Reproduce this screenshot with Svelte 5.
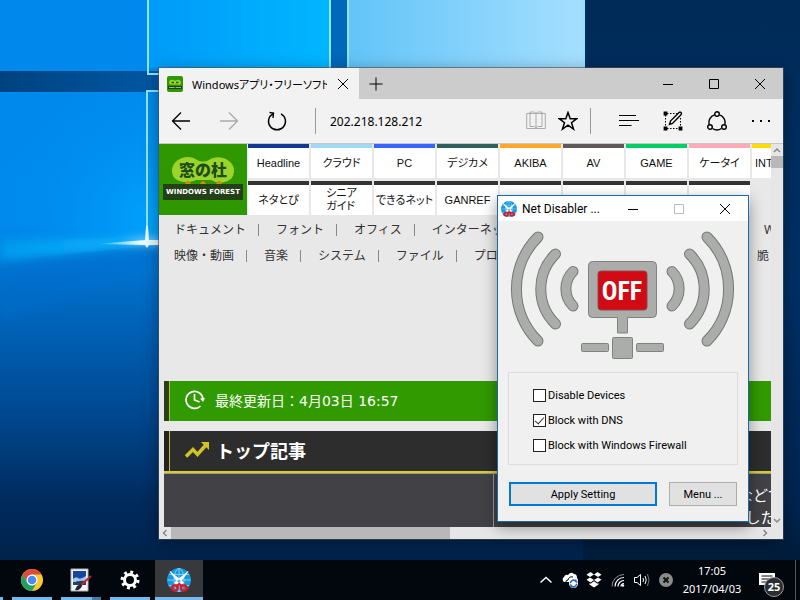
<script lang="ts">
  type NavItem = { label: string; color: string };

  const sites: NavItem[] = [
    { label: "Headline", color: "#103794" },
    { label: "クラウド", color: "#a0d8f5" },
    { label: "PC", color: "#3764ff" },
    { label: "デジカメ", color: "#2c6160" },
    { label: "AKIBA", color: "#ffa726" },
    { label: "AV", color: "#605758" },
    { label: "GAME", color: "#00cf63" },
    { label: "ケータイ", color: "#ffabb7" },
    { label: "INTERNET", color: "#ffdc00" },
  ];
  const moreSites = ["ネタとぴ", "シニア\nガイド", "できるネット", "GANREF", "", "", "", ""];

  const categories = [
    { links: ["ドキュメント", "フォント", "オフィス", "インターネット"], last: "W" },
    { links: ["映像・動画", "音楽", "システム", "ファイル", "プログラミング"], last: "脆" },
  ];

  let address = $state("202.218.128.212");
  let options = $state([
    { id: "devices", label: "Disable Devices", checked: false },
    { id: "dns", label: "Block with DNS", checked: true },
    { id: "firewall", label: "Block with Windows Firewall", checked: false },
  ]);
</script>

{#snippet appIcon(size: number)}
  <svg width={size} height={size} viewBox="0 0 24 24">
    <circle cx="12" cy="12" r="12" fill="#1797dd" />
    <g fill="none" stroke="#7fd0f5" stroke-width="1">
      <ellipse cx="12" cy="12" rx="5" ry="11.5" />
      <path d="M12 0v24M0.500 12h23M2 6.500h20M2 17.500h20" />
    </g>
    <path d="M3 3.500 13.500 18l3-3.500zM21 3.500 10.500 18l-3-3.500z" fill="#fff" stroke="#fff" stroke-width="0.800" />
    <g fill="none" stroke="#e3141c" stroke-width="2.200">
      <ellipse cx="7.800" cy="20" rx="2.800" ry="2.600" />
      <ellipse cx="16.800" cy="20" rx="2.800" ry="2.600" />
      <path d="m9.500 18 2.800-2 2.800 2" />
      <path d="M4.500 19v3M20.500 19v3" stroke-width="1.500" />
    </g>
  </svg>
{/snippet}

<div class="screen">
  <main class="desktop">
    <svg class="wallpaper" viewBox="0 0 800 560" preserveAspectRatio="none" aria-hidden="true">
      <defs>
        <linearGradient id="base" x1="0" y1="0" x2="0" y2="1">
          <stop offset="0" stop-color="#0088ec" />
          <stop offset="0.400" stop-color="#008aee" />
          <stop offset="0.520" stop-color="#006cc6" />
          <stop offset="0.720" stop-color="#004b95" />
          <stop offset="0.900" stop-color="#002a5c" />
          <stop offset="1" stop-color="#00234b" />
        </linearGradient>
        <linearGradient id="night" x1="0" y1="0" x2="0" y2="1">
          <stop offset="0" stop-color="#002b58" />
          <stop offset="0.500" stop-color="#003066" />
          <stop offset="0.900" stop-color="#002450" />
          <stop offset="1" stop-color="#001c3b" />
        </linearGradient>
        <linearGradient id="pane-left" x1="0" y1="0" x2="1" y2="0">
          <stop offset="0" stop-color="#009af8" />
          <stop offset="1" stop-color="#00b7ff" />
        </linearGradient>
        <linearGradient id="pane-right" x1="0" y1="0" x2="1" y2="0">
          <stop offset="0" stop-color="#62c4f8" />
          <stop offset="1" stop-color="#a5dfff" />
        </linearGradient>
        <linearGradient id="beam" x1="0" y1="0" x2="1" y2="0">
          <stop offset="0" stop-color="#00b4ff" stop-opacity="0.500" />
          <stop offset="0.750" stop-color="#14c0ff" stop-opacity="0.700" />
          <stop offset="1" stop-color="#e8fbff" />
        </linearGradient>
        <linearGradient id="flare" x1="0" y1="0" x2="1" y2="0">
          <stop offset="0" stop-color="#e9fcff" stop-opacity="0" />
          <stop offset="0.700" stop-color="#e9fcff" />
        </linearGradient>
        <radialGradient id="glow" cx="160" cy="220" r="165" gradientUnits="userSpaceOnUse">
          <stop offset="0" stop-color="#00a4ff" />
          <stop offset="1" stop-color="#008bed" stop-opacity="0" />
        </radialGradient>
        <linearGradient id="bar" x1="0" y1="0" x2="1" y2="0">
          <stop offset="0" stop-color="#00427f" />
          <stop offset="1" stop-color="#0058a4" />
        </linearGradient>
        <filter id="soft" x="-20%" y="-60%" width="140%" height="220%"><feGaussianBlur stdDeviation="5" /></filter>
      </defs>
      <rect width="800" height="560" fill="url(#base)" />
      <path d="M0 0h160v245L0 260z" fill="url(#glow)" />
      <rect x="583" width="217" height="560" fill="url(#night)" />
      <rect y="71" width="160" height="21" fill="url(#bar)" />
      <rect x="147" width="186" height="68" fill="url(#pane-left)" />
      <rect x="331" width="16" height="68" fill="#0068b8" />
      <rect x="348" width="236" height="68" fill="url(#pane-right)" />
      <g fill="none" stroke="#8ee6ff" stroke-width="2">
        <path d="M148 0v74h12M147 245V91h13M330 0v68M348 0v68M584 0v68" />
      </g>
      <path d="M0 240 145 238l15 2v5l-14 1L0 262z" fill="url(#beam)" filter="url(#soft)" />
      <path d="M0 266 146 246h14v18L0 322z" fill="#006dcc" opacity="0.500" filter="url(#soft)" />
      <path d="M96 244 145 240l1-14h2l1 14h11v5h-11l-2 3-2-3z" fill="url(#flare)" />
    </svg>

    <section class="browser" aria-label="Browser">
      <header class="tab-bar">
        <div class="tab">
          <svg width="16" height="16" viewBox="0 0 16 16">
            <rect width="16" height="16" rx="2" fill="#2f9800" />
            <path d="M2 6.500a3 3 0 0 1 5-2h2a3 3 0 0 1 5 2c0 2-2 3-3 2H5c-2 .500-3-1-3-2z" fill="#9bd52b" />
            <path d="M4.500 6.500h2.500M9 6.500h2.500" stroke="#1e5318" stroke-width="1.500" />
            <path d="M1 10h14v3H1z" fill="#244019" />
            <path d="M2 11.500h5.500M8.500 11.500H14" stroke="#9db394" />
          </svg>
          <span class="tab-title">Windowsアプリ・フリーソフト</span>
          <button class="tab-close" aria-label="Close tab">
            <svg width="12" height="12" viewBox="0 0 12 12"><path d="m1 1 10 10M11 1 1 11" /></svg>
          </button>
        </div>
        <button class="new-tab" aria-label="New tab">
          <svg width="14" height="14" viewBox="0 0 14 14"><path d="M7 0.500v13M0.500 7h13" /></svg>
        </button>
        <div class="window-buttons">
          <button aria-label="Minimize"><svg width="12" height="12" viewBox="0 0 12 12"><path d="M1 6.500h10" /></svg></button>
          <button aria-label="Maximize"><svg width="12" height="12" viewBox="0 0 12 12"><path d="M1.500 1.500h9v9h-9z" /></svg></button>
          <button aria-label="Close"><svg width="12" height="12" viewBox="0 0 12 12"><path d="m1 1 10 10M11 1 1 11" /></svg></button>
        </div>
      </header>

      <div class="toolbar">
        <div class="history">
          <button aria-label="Back">
            <svg width="20" height="20" viewBox="0 0 20 20"><path d="M19 10H1.500M10 1.500 1.500 10l8.500 8.500" stroke-width="1.300" /></svg>
          </button>
          <button class="disabled" aria-label="Forward" disabled>
            <svg width="20" height="20" viewBox="0 0 20 20"><path d="M1 10h17.500M10 1.500l8.500 8.500-8.500 8.500" stroke-width="1.300" /></svg>
          </button>
          <button aria-label="Refresh">
            <svg width="20" height="20" viewBox="0 0 20 20"><path d="M6 2.800A8.500 8.500 0 1 0 14 2.800M2.500 1.500 6.500 2l-.5 5" stroke-width="1.400" /></svg>
          </button>
        </div>
        <input class="address" bind:value={address} aria-label="Address" />
        <button class="small disabled" aria-label="Reading view">
          <svg width="20" height="20" viewBox="0 0 20 20"><path d="M.7 2.500h18.600v15H.7zM4 1h4.500L10 2.500 11.500 1H16v14.500h-4.500L10 17l-1.500-1.500H4zM10 2.500V17" /></svg>
        </button>
        <button class="small" aria-label="Add to favorites">
          <svg width="20" height="20" viewBox="0 0 20 20"><path d="m10 1.500 2.200 6.200h6.600l-5.300 4 2 6.300-5.500-3.900L4.500 18l2-6.300-5.300-4h6.600z" stroke-width="1.500" /></svg>
        </button>
        <div class="tools">
          <button aria-label="Hub">
            <svg width="20" height="20" viewBox="0 0 20 20"><path d="M0 4.500h17M0 9.500h20M0 14.500h12.500" stroke-width="1.200" /></svg>
          </button>
          <button aria-label="Web note">
            <svg width="20" height="20" viewBox="0 0 20 20">
              <path d="M4 2.500h10M2.500 4v12M4 17.500h12M17.500 7v9" stroke-dasharray="1.500 1.500" />
              <path d="M1.500 1.500h2v2h-2zM1.500 16.500h2v2h-2zM16.500 16.500h2v2h-2z" stroke-width="1.800" />
              <path d="m6.500 13.500 1-3.500L16 1.500q1.500-1 2.200.3.800 1-.2 2L9.500 12.500z" stroke-width="1.400" />
            </svg>
          </button>
          <button aria-label="Share">
            <svg width="20" height="20" viewBox="0 0 20 20">
              <g stroke-width="1.400">
                <circle cx="10" cy="3" r="2.300" /><circle cx="3" cy="16" r="2.300" /><circle cx="17" cy="16" r="2.300" />
                <path d="M7.500 3.800A8 8 0 0 0 2.200 13.500M12.500 3.800A8 8 0 0 1 17.800 13.500M5.500 17.500a8 8 0 0 0 9 0" />
              </g>
            </svg>
          </button>
          <button aria-label="More">
            <svg width="20" height="20" viewBox="0 0 20 20"><path d="M1 9h2v2H1zM9 9h2v2H9zM17 9h2v2h-2z" fill="currentColor" stroke="none" /></svg>
          </button>
        </div>
      </div>

      <div class="viewport">
        <div class="page">
          <div class="site-header">
            <a class="logo" href="#top" aria-label="窓の杜">
              <svg width="80" height="46" viewBox="0 0 80 46">
                <path d="M9 15C9 3 25-3 34 4q6 3 12 0C55-3 72 4 71 15c0 12-15 14-23 9H33C25 28 9 27 9 15z" fill="#9bd52b" />
                <path d="M22 28q3-7 6 0zM37 28q3-6 6 0zM53 28q3-7 6 0z" fill="#d58b0a" />
                <path d="M0 28h80v16H0z" fill="#244019" />
                <text class="logo-name" x="40" y="20">窓の杜</text>
                <text class="logo-sub" x="40" y="38">WINDOWS FOREST</text>
              </svg>
            </a>
            <nav class="sites">
              {#each sites as site}
                <a class="site" href="#top" style:border-color={site.color}>{site.label}</a>
              {/each}
              {#each moreSites as site}
                {#if site}
                  <a class="site" href="#top">{site}</a>
                {:else}
                  <span class="site"></span>
                {/if}
              {/each}
            </nav>
          </div>

          <div class="categories">
            {#each categories as row}
              <nav class="category-row">
                {#each row.links as link}
                  <a href="#top">{link}</a>
                {/each}
                <a class="last" href="#top">{row.last}</a>
              </nav>
            {/each}
          </div>

          <div class="banner updated">
            <svg width="20" height="20" viewBox="0 0 20 20" fill="none" stroke="#fff" stroke-width="1.700">
              <path d="M15.500 16A8.500 8.500 0 1 1 18 9" />
              <path d="M9.500 4v6l5 2" />
              <path d="m15 8.500 5-.5-2 4z" fill="#fff" stroke="none" />
            </svg>
            最終更新日：4月03日 16:57
          </div>

          <h2 class="banner top-news">
            <svg width="24" height="18" viewBox="0 0 24 18">
              <path d="m1 15.500 7-7 4.500 5 8-9" fill="none" stroke="#d0c426" stroke-width="3.500" />
              <path d="M16 1h8v8z" fill="#d0c426" />
            </svg>
            トップ記事
          </h2>
          <div class="news">
            <div class="news-photo"></div>
            <p>などで<br />&ensp;した</p>
          </div>
        </div>

        <div class="v-scroll">
          <svg width="12" height="12" viewBox="0 0 12 12"><path d="m3 8 3-3 3 3" /></svg>
          <div class="v-thumb"></div>
          <svg class="down" width="12" height="12" viewBox="0 0 12 12"><path d="m3 4 3 3 3-3" /></svg>
        </div>
        <div class="h-scroll">
          <svg width="12" height="12" viewBox="0 0 12 12"><path d="M7.500 3 4.500 6l3 3" /></svg>
          <div class="h-thumb"></div>
          <svg class="right" width="12" height="12" viewBox="0 0 12 12"><path d="m4.500 3 3 3-3 3" /></svg>
        </div>
      </div>
    </section>

    <section class="dialog" aria-label="Net Disabler">
      <header class="dialog-title">
        {@render appIcon(16)}
        <span>Net Disabler ...</span>
        <div class="window-buttons">
          <button aria-label="Minimize"><svg width="12" height="12" viewBox="0 0 12 12"><path d="M1 6.500h10" /></svg></button>
          <button class="disabled" aria-label="Maximize" disabled><svg width="12" height="12" viewBox="0 0 12 12"><path d="M1.500 1.500h9v9h-9z" /></svg></button>
          <button aria-label="Close"><svg width="12" height="12" viewBox="0 0 12 12"><path d="m1 1 10 10M11 1 1 11" /></svg></button>
        </div>
      </header>

      <svg class="status" viewBox="0 0 250 140" role="img" aria-label="OFF">
        <defs>
          <g id="waves" fill="none" stroke-linecap="round">
            <path d="M209 16a73.500 73.500 0 0 1 0 104" />
            <path d="M191.500 33a49 49 0 0 1 0 70" />
            <path d="M174 50.500a24.500 24.500 0 0 1 0 34.500" />
          </g>
        </defs>
        <g stroke="#757775" stroke-width="11">
          <use href="#waves" />
          <use href="#waves" transform="matrix(-1 0 0 1 249 0)" />
        </g>
        <g stroke="#abadab" stroke-width="9">
          <use href="#waves" />
          <use href="#waves" transform="matrix(-1 0 0 1 249 0)" />
        </g>
        <g fill="#abadab" stroke="#808280">
          <rect x="90.500" y="40.500" width="68" height="56" rx="4" />
          <path d="M119.500 96.500v15.500h10V96.500" />
          <rect x="114.500" y="116.500" width="20" height="21" rx="1" />
          <rect x="83.500" y="122.500" width="27" height="8" rx="1" />
          <rect x="138.500" y="122.500" width="27" height="8" rx="1" />
        </g>
        <path d="M120 94h9v5h-9z" fill="#abadab" />
        <rect x="100" y="50" width="49" height="39" rx="3" fill="#d20a14" stroke="#8c4a4c" />
        <text class="off" x="124" y="79">OFF</text>
      </svg>

      <fieldset class="options">
        {#each options as option (option.id)}
          <div class="option">
            <input type="checkbox" id={option.id} bind:checked={option.checked} />
            <label for={option.id}>{option.label}</label>
          </div>
        {/each}
      </fieldset>

      <div class="actions">
        <button class="apply">Apply Setting</button>
        <button class="menu">Menu ...</button>
      </div>
    </section>
  </main>

  <footer class="taskbar">
    <div class="task-edge"></div>
    <div class="tasks">
      <button class="task" aria-label="Chrome">
        <svg width="22" height="22" viewBox="0 0 22 22">
          <circle cx="11" cy="11" r="11" fill="#fbc92d" />
          <path d="M1.500 5.500A11 11 0 0 1 20.500 5.500H11L6.200 13.700z" fill="#dd4b3e" />
          <path d="M1.500 5.500A11 11 0 0 0 11 22l4.800-8.300-9.600 0z" fill="#1da261" />
          <circle cx="11" cy="11" r="5.500" fill="#fff" />
          <circle cx="11" cy="11" r="4.300" fill="#4a8af4" />
        </svg>
      </button>
      <button class="task stacked" aria-label="Image editor">
        <svg width="22" height="24" viewBox="0 0 22 24">
          <path d="M1 1h17v22H1z" fill="#f4f5f5" stroke="#aeb4ba" />
          <path d="M3 3h13v14H3z" fill="#1646a0" />
          <path d="M3 11q3-3 5-1t8-2v6H3z" fill="#a7c7e8" />
          <path d="M3 15q5-3 13-2v4H3z" fill="#2a3f66" />
          <path d="M21 8 10 18" stroke="#b32936" stroke-width="2" />
          <path d="m11 16-4 2-2 4q5 1 7-4z" fill="#20242c" />
        </svg>
      </button>
      <button class="task" aria-label="Settings">
        <svg width="20" height="20" viewBox="0 0 20 20" fill="none" stroke="#fff">
          <circle cx="10" cy="10" r="5.500" stroke-width="3" />
          <circle cx="10" cy="10" r="8" stroke-width="3" stroke-dasharray="2.900 3.380" />
        </svg>
      </button>
      <button class="task active" aria-label="Net Disabler">
        {@render appIcon(24)}
      </button>
    </div>

    <div class="tray">
      <button aria-label="Show hidden icons">
        <svg width="16" height="16" viewBox="0 0 16 16"><path d="m2.500 10.500 5.500-5 5.500 5" stroke-width="1.500" /></svg>
      </button>
      <button aria-label="OneDrive">
        <svg width="18" height="18" viewBox="0 0 18 18">
          <path d="M3 11a3 3 0 0 1 0-5q1-3 4-2 3-4 6-1 3 0 3 4 2 2 0 4z" fill="#fff" stroke="none" />
          <path d="M5 13q-1-4 2-4 1-4 5-3" stroke="#02060d" />
          <circle cx="12.500" cy="12.500" r="4.500" fill="#fff" stroke="none" />
          <path d="M9.500 12a3 3 0 0 1 5.500-1.500v-2M15.500 13a3 3 0 0 1-5.500 1.500v2" stroke="#2467b8" stroke-width="1.500" />
        </svg>
      </button>
      <button aria-label="Dropbox">
        <svg width="16" height="16" viewBox="0 0 16 16">
          <path d="M4.500 0 8 2.500 4 5 .500 2.800zM11.500 0 8 2.500 12 5l3.500-2.200zM.500 7.800 4 5.500 8 8l-3.500 2.500zM15.500 7.800 12 5.500 8 8l3.500 2.500zM3.500 11l1 .7L8 9.200l3.500 2.500 1-.7v1.500L8 15.500l-4.500-3z" fill="#fff" stroke="none" />
        </svg>
      </button>
      <button aria-label="Network">
        <svg width="16" height="16" viewBox="0 0 16 16">
          <path d="M2 14.500A12 12 0 0 1 14 2.500" stroke="#8b8d90" />
          <path d="M5 14.500a9 9 0 0 1 9-9M8 14.500a6 6 0 0 1 6-6M11 14.500a3 3 0 0 1 3-3" stroke-width="1.200" />
          <circle cx="13" cy="13.500" r="1.200" fill="#fff" stroke="none" />
        </svg>
      </button>
      <button aria-label="Volume">
        <svg width="18" height="16" viewBox="0 0 18 16">
          <path d="M1.500 5.500H4l3.500-3v11l-3.500-3H1.500z" />
          <path d="M10 6q1 2 0 4M12 4q2.500 4 0 8" />
          <path d="M14.500 2q3 6 0 12" stroke="#777" />
        </svg>
      </button>
      <button aria-label="Sync stopped">
        <svg width="16" height="16" viewBox="0 0 16 16">
          <circle cx="8" cy="8" r="7" fill="#8b8b8b" stroke="none" />
          <path d="m5.500 5.500 5 5M10.500 5.500l-5 5" stroke="#111" stroke-width="2" />
        </svg>
      </button>
      <time class="clock" datetime="2017-04-03T17:05">17:05<br />2017/04/03</time>
      <button class="notifications" aria-label="25 notifications">
        <svg width="18" height="18" viewBox="0 0 18 18">
          <path d="M1 2h16v12h-6v4l-4-4H1z" fill="#fff" stroke="none" />
          <path d="M3.500 5h11M3.500 8h11M3.500 11h7" stroke="#05070d" />
        </svg>
        <span class="badge">25</span>
      </button>
      <div class="show-desktop"></div>
    </div>
  </footer>
</div>

<style>
  :global(body) {
    margin: 0;
  }

  .screen {
    display: flex;
    flex-direction: column;
    min-height: 100vh;
    overflow: hidden;
    font-family: "Noto Sans", "Noto Sans CJK JP", sans-serif;
    font-size: 12px;
    color: #000;
  }

  button {
    display: flex;
    align-items: center;
    justify-content: center;
    padding: 0;
    border: none;
    background: none;
    color: inherit;
    font: inherit;
  }

  a {
    color: inherit;
    text-decoration: none;
  }

  svg {
    flex: none;
    display: block;
  }

  .desktop {
    position: relative;
    flex: 1;
    min-height: 560px;
    background: #00234b;
  }

  .wallpaper {
    position: absolute;
    inset: 0;
    width: 100%;
    height: 100%;
  }

  .browser {
    position: absolute;
    left: 159px;
    top: 68px;
    width: 624px;
    background: #f2f2f2;
    box-shadow: 0 0 0 1px rgba(70, 80, 90, 0.6), 0 4px 16px rgba(0, 0, 0, 0.4);
  }

  .tab-bar {
    display: flex;
    height: 31px;
    background: #ccc;
  }

  .tab {
    display: flex;
    align-items: center;
    width: 200px;
    padding-left: 8px;
    box-sizing: border-box;
    background: #f2f2f2;
  }

  .tab-title {
    flex: 1;
    min-width: 0;
    margin-left: 9px;
    overflow: hidden;
    white-space: nowrap;
    font-size: 11px;
    font-feature-settings: "palt";
  }

  .tab-close {
    width: 32px;
    height: 31px;
  }

  .new-tab {
    width: 34px;
  }

  .tab-bar button svg,
  .toolbar svg,
  .dialog-title button svg {
    fill: none;
    stroke: currentColor;
  }

  .window-buttons {
    display: flex;
    margin-left: auto;
  }

  .window-buttons button {
    width: 46px;
  }

  .toolbar {
    display: flex;
    align-items: center;
    height: 44px;
    border-bottom: 1px solid #c6c6c6;
  }

  .history {
    display: flex;
    gap: 4px;
    padding-right: 16px;
    border-right: 1px solid #999;
  }

  .toolbar button {
    width: 44px;
    height: 26px;
  }

  .toolbar .small {
    width: 32px;
  }

  .toolbar .disabled {
    color: #aaa;
  }

  .address {
    flex: 1;
    min-width: 0;
    padding: 0 14px;
    border: none;
    outline: none;
    background: none;
    font: inherit;
  }

  .tools {
    display: flex;
    margin-left: 6px;
    padding-left: 16px;
    border-left: 1px solid #999;
  }

  .viewport {
    display: grid;
    grid-template-columns: minmax(0, 1fr) 12px;
    grid-template-rows: 383px 12px;
    background: #e6e6e6;
  }

  .page {
    overflow: hidden;
    background: #e8e8e8;
  }

  .site-header {
    display: flex;
    gap: 1px;
  }

  .logo {
    display: flex;
    flex: none;
    justify-content: center;
    width: 88px;
    height: 71px;
    box-sizing: border-box;
    padding-top: 12px;
    background: #2f9800;
  }

  .logo-name {
    font: 900 16px "Noto Sans CJK JP", sans-serif;
    text-anchor: middle;
    fill: #1f4c17;
  }

  .logo-sub {
    font: bold 7px "DejaVu Sans", sans-serif;
    text-anchor: middle;
    fill: #fff;
  }

  .sites {
    display: grid;
    grid-template-columns: repeat(9, 61px);
    grid-template-rows: 34px 34px;
    gap: 3px 2px;
  }

  .site {
    display: flex;
    align-items: center;
    justify-content: center;
    border-top: 4px solid #333;
    background: #fff;
    color: #111;
    font-family: "Liberation Sans", "Noto Sans CJK JP", sans-serif;
    font-size: 11px;
    font-feature-settings: "palt";
    line-height: 13px;
    white-space: pre;
  }

  .categories {
    padding: 2px 0 0 15px;
    color: #333;
  }

  .category-row {
    display: flex;
    height: 26px;
    align-items: center;
    line-height: 12px;
    white-space: nowrap;
  }

  .category-row a {
    flex: none;
    margin-right: 17px;
    padding-right: 12px;
    border-right: 1px solid #888;
  }

  .category-row .last {
    width: 14px;
    margin: 0 0 0 auto;
    padding: 0;
    border: none;
    overflow: hidden;
  }

  .category-row:first-child .last {
    width: 7px;
  }

  .banner {
    display: flex;
    align-items: center;
    height: 38px;
    margin: 10px 0 0 5px;
    padding: 0 0 2px 16px;
    border-left: 5px solid #264019;
    box-shadow: inset 1px 0 #c4be2c;
    color: #fff;
  }

  .updated {
    gap: 10px;
    margin-top: 112px;
    background: #319a00;
    font-family: "DejaVu Sans", "Noto Sans CJK JP", sans-serif;
    font-size: 14px;
  }

  .top-news {
    gap: 7px;
    border-left-color: #222;
    background: #2d2d2d;
    font-size: 18px;
    font-weight: bold;
  }

  .news {
    display: flex;
    justify-content: space-between;
    height: 54px;
    margin-left: 5px;
    border-top: 2px solid #d9ce20;
    background: #424246;
    color: #fff;
    box-shadow: inset 0 1px #999;
  }

  .news-photo {
    width: 329px;
    border-right: 1px solid #999;
  }

  .news p {
    margin: 11px 0 0;
    width: 33px;
    font-size: 15px;
    line-height: 22px;
    white-space: nowrap;
  }

  .v-scroll {
    display: flex;
    flex-direction: column;
  }

  .v-thumb {
    height: 12px;
    background: #b8b8b8;
  }

  .down {
    margin-top: auto;
  }

  .h-scroll {
    grid-column: 1;
    display: flex;
  }

  .h-thumb {
    width: 279px;
    background: #b8b8b8;
  }

  .right {
    margin-left: auto;
  }

  .v-scroll svg,
  .h-scroll svg {
    fill: none;
    stroke: #888;
    stroke-width: 1.5;
  }

  .dialog {
    position: absolute;
    left: 497px;
    top: 195px;
    width: 250px;
    border: 1px solid #1a6aa8;
    background: #f0f0f0;
    box-shadow: 0 5px 14px rgba(0, 0, 0, 0.4);
    font-family: Roboto, "Noto Sans", sans-serif;
  }

  .dialog-title {
    display: flex;
    align-items: center;
    gap: 5px;
    height: 25px;
    padding-left: 3px;
    background: #fff;
    white-space: nowrap;
  }

  .dialog-title .disabled {
    color: #bbb;
  }

  .status {
    width: 100%;
  }

  .off {
    font: bold 26px "Liberation Sans Narrow", "Roboto Condensed", "Liberation Sans", sans-serif;
    text-anchor: middle;
    fill: #fff;
  }

  .options {
    margin: 11px 10px 0;
    padding: 10px 0 6px 24px;
    border: 1px solid #dcdcdc;
  }

  .option {
    display: flex;
    align-items: center;
    gap: 2px;
    height: 25px;
    font-size: 11px;
  }

  .option input {
    display: flex;
    justify-content: center;
    width: 13px;
    height: 13px;
    margin: 0;
    box-sizing: border-box;
    border: 1px solid #222;
    background: #fff;
    appearance: none;
  }

  .option input:checked::after {
    content: "";
    width: 4px;
    height: 8px;
    border: solid #333;
    border-width: 0 1px 1px 0;
    transform: rotate(42deg);
  }

  .actions {
    display: flex;
    gap: 12px;
    padding: 17px 11px 15px;
    font-size: 11px;
  }

  .actions button {
    height: 24px;
    box-sizing: border-box;
    border: 1px solid #adadad;
    background: #e1e1e1;
  }

  .actions .apply {
    flex: 1;
    border: 2px solid #0078d7;
  }

  .actions .menu {
    width: 68px;
  }

  .taskbar {
    display: flex;
    height: 40px;
    background: #02060d;
    color: #fff;
  }

  .task-edge {
    width: 3px;
    margin-right: 5px;
    box-shadow: inset 0 -3px #76b9ed;
  }

  .tasks {
    display: flex;
    gap: 1px;
  }

  .task {
    width: 48px;
    border: solid transparent;
    border-width: 0 4px;
    background: linear-gradient(#76b9ed, #76b9ed) bottom / 100% 3px no-repeat padding-box;
  }

  .task.stacked {
    background: linear-gradient(90deg, #76b9ed 31px, #4b7ba4 31px) bottom / 100% 3px no-repeat padding-box;
  }

  .task.active {
    border: none;
    background-color: #37393d;
  }

  .tray {
    display: flex;
    margin-left: auto;
  }

  .tray button {
    width: 24px;
  }

  .tray svg {
    fill: none;
    stroke: #fff;
  }

  .clock {
    width: 68px;
    padding-top: 2px;
    font-size: 11px;
    line-height: 18px;
    text-align: center;
  }

  .tray .notifications {
    position: relative;
    width: 42px;
    margin-right: 7px;
  }

  .badge {
    position: absolute;
    left: 18px;
    top: 17px;
    width: 18px;
    height: 18px;
    border: 1px solid #999;
    border-radius: 50%;
    background: #2b2d31;
    font-size: 11px;
    font-weight: bold;
    line-height: 18px;
  }

  .show-desktop {
    width: 4px;
    border-left: 1px solid #555;
  }
</style>
